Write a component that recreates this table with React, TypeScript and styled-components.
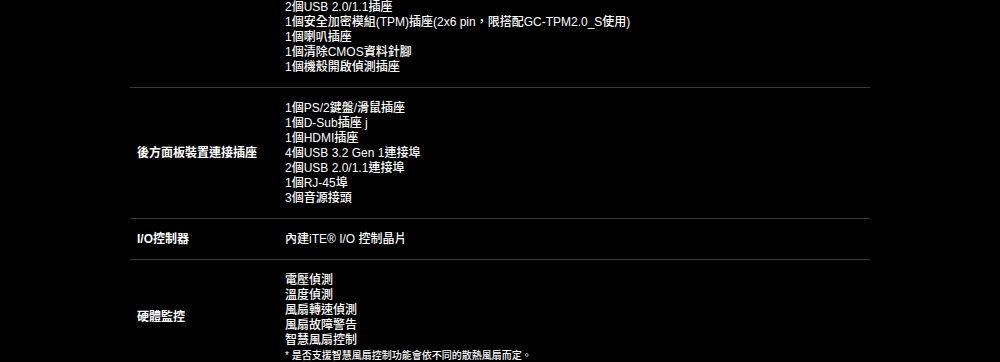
import styled, { createGlobalStyle } from 'styled-components'

interface SpecRow {
  key: string
  label: string
  items: string[]
  note?: string
}

const specRows: SpecRow[] = [
  {
    key: 'internal-connectors',
    label: '',
    items: [
      '2個USB 2.0/1.1插座',
      '1個安全加密模組(TPM)插座(2x6 pin，限搭配GC-TPM2.0_S使用)',
      '1個喇叭插座',
      '1個清除CMOS資料針腳',
      '1個機殼開啟偵測插座',
    ],
  },
  {
    key: 'back-panel',
    label: '後方面板裝置連接插座',
    items: [
      '1個PS/2鍵盤/滑鼠插座',
      '1個D-Sub插座 j',
      '1個HDMI插座',
      '4個USB 3.2 Gen 1連接埠',
      '2個USB 2.0/1.1連接埠',
      '1個RJ-45埠',
      '3個音源接頭',
    ],
  },
  {
    key: 'io-controller',
    label: 'I/O控制器',
    items: ['內建iTE® I/O 控制晶片'],
  },
  {
    key: 'hardware-monitor',
    label: '硬體監控',
    items: ['電壓偵測', '溫度偵測', '風扇轉速偵測', '風扇故障警告', '智慧風扇控制'],
    note: '* 是否支援智慧風扇控制功能會依不同的散熱風扇而定。',
  },
]

const GlobalStyle = createGlobalStyle`
  html, body {
    margin: 0;
    padding: 0;
    background: #000;
  }
  body {
    font-family: "Liberation Sans", "Noto Sans CJK TC", Arial, sans-serif;
    color: #fff;
    font-size: 12px;
  }
`

const Page = styled.main`
  width: 1000px;
  height: 362px;
  overflow: hidden;
  background: #000;
`
// page is scrolled a little: the first row starts above the window
const SpecTable = styled.div`
  width: 740px;
  margin: -13px auto 0;
`
const Row = styled.div`
  display: grid;
  grid-template-columns: 155px 1fr;
  align-items: center;
  border-bottom: 1px solid #3a3a3a;
`
const Label = styled.div`
  padding-left: 7px;
  font-size: 12px;
  line-height: 15px;
  font-weight: 700;
`
const Values = styled.ul`
  list-style: none;
  margin: 0;
  padding: 13px 0 12px;
`
const Item = styled.li`
  font-size: 12px;
  line-height: 15px;
  font-weight: 500;
  white-space: nowrap;
`
const Note = styled(Item)`
  font-size: 10px;
`

const SpecRowView: React.FC<{ row: SpecRow }> = ({ row }) => (
  <Row id={row.key}>
    <Label>{row.label}</Label>
    <Values>
      {row.items.map(item => (
        <Item key={item}>{item}</Item>
      ))}
      {row.note ? <Note>{row.note}</Note> : null}
    </Values>
  </Row>
)

export default () => (
  <>
    <GlobalStyle />
    <Page>
      <SpecTable>
        {specRows.map(row => (
          <SpecRowView key={row.key} row={row} />
        ))}
      </SpecTable>
    </Page>
  </>
)
